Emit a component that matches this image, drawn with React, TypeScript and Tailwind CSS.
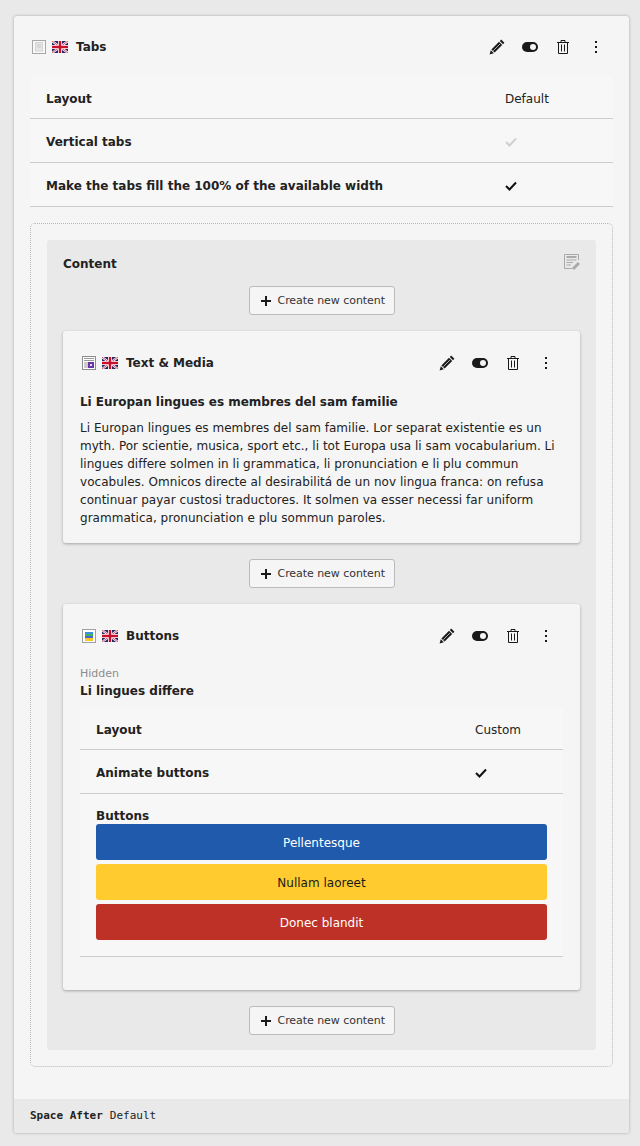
import { ReactNode } from 'react'

function UkFlag() {
  return (
    <svg width="16" height="12" viewBox="0 0 16 12" className="block shrink-0">
      <rect width="16" height="12" fill="#232a66" />
      <path d="M0 0L16 12M16 0L0 12" stroke="#fff" strokeWidth="2.2" />
      <path d="M0 0L16 12M16 0L0 12" stroke="#c8223c" strokeWidth="0.8" />
      <path d="M8 0V12M0 6H16" stroke="#fff" strokeWidth="4" />
      <path d="M8 0V12M0 6H16" stroke="#c8102e" strokeWidth="2.4" />
    </svg>
  )
}

function TabsIcon() {
  return (
    <svg width="14" height="14" viewBox="0 0 14 14" className="block shrink-0">
      <rect x="0.5" y="0.5" width="13" height="13" fill="#f8f8f8" stroke="#a8a8a8" />
      <rect x="3.5" y="2.5" width="7" height="8.5" fill="#e6e6e6" stroke="#d4d4d4" />
      <path d="M5 5H9M5 7H9" stroke="#c8c8c8" />
    </svg>
  )
}

function TextMediaIcon() {
  return (
    <svg width="14" height="14" viewBox="0 0 14 14" className="block shrink-0">
      <rect x="0.5" y="0.5" width="13" height="13" fill="#fff" stroke="#8c8c8c" />
      <path d="M2 2.5H12M2 4.5H12M2 7H6M2 9H6M2 11H6" stroke="#999999" />
      <rect x="6" y="6" width="6" height="6" fill="#6b35a8" />
      <rect x="8" y="8" width="2" height="2" fill="#e6def0" />
    </svg>
  )
}

function ButtonsIcon() {
  return (
    <svg width="14" height="14" viewBox="0 0 14 14" className="block shrink-0">
      <rect x="0.5" y="0.5" width="13" height="13" fill="#fff" stroke="#a0a0a0" />
      <rect x="3" y="3" width="8" height="2" fill="#3b8fe0" />
      <rect x="3" y="5" width="8" height="2" fill="#45b35a" />
      <rect x="3" y="7" width="8" height="2" fill="#4a62d0" />
      <rect x="3" y="9" width="8" height="3" fill="#fbc528" />
    </svg>
  )
}

function ActionIcons() {
  return (
    <div className="mr-px flex items-center text-[#1a1a1a]">
      <div className="flex h-[32px] w-[33px] items-center justify-center">
        <svg width="16" height="16" viewBox="0 0 16 16" fill="currentColor">
          <path d="M12.2.6L15.4 3.8 14 5.2 10.8 2z" />
          <path d="M10 2.8L13.2 6 5.6 13.6 2.4 10.4z" />
          <path d="M1.8 11.2L4.8 14.2 .6 15.4z" />
          <path d="M4.4 11.6L11 5" stroke="#f5f5f5" strokeWidth="0.7" fill="none" />
        </svg>
      </div>
      <div className="flex h-[32px] w-[33px] items-center justify-center">
        <svg width="16" height="10" viewBox="0 0 16 10">
          <rect width="16" height="10" rx="5" fill="currentColor" />
          <circle cx="11" cy="5" r="3" fill="#f5f5f5" />
        </svg>
      </div>
      <div className="flex h-[32px] w-[33px] items-center justify-center">
        <svg width="16" height="16" viewBox="0 0 16 16" fill="none" stroke="currentColor">
          <path d="M2 3.5H14M6 3.5V1.5H10V3.5M3.5 3.5V14.5H12.5V3.5M6.5 5.5V12.5M9.5 5.5V12.5" />
        </svg>
      </div>
      <div className="flex h-[32px] w-[33px] items-center justify-center">
        <svg width="16" height="16" viewBox="0 0 16 16" fill="currentColor">
          <rect x="7" y="2" width="2" height="2" />
          <rect x="7" y="7" width="2" height="2" />
          <rect x="7" y="12" width="2" height="2" />
        </svg>
      </div>
    </div>
  )
}

function CreateButton() {
  return (
    <div className="flex justify-center">
      <div className="flex h-[29px] w-[146px] items-center rounded-[3px] border border-[#bbbbbb] bg-[#f5f5f5] pl-[10px] text-[11px] text-[#333333]">
        <svg width="12" height="12" viewBox="0 0 12 12" className="mr-[6px]">
          <path d="M6 1V11M1 6H11" stroke="#1a1a1a" strokeWidth="2" />
        </svg>
        <span className="pt-[2px] tracking-[-0.05px]">Create new content</span>
      </div>
    </div>
  )
}

function Check({ muted }: { muted?: boolean }) {
  return (
    <svg width="12" height="10" viewBox="0 0 12 10" fill="none" className="block">
      <path d="M1 5L4.5 8.5L11 1.5" stroke={muted ? '#d0d0d0' : '#111111'} strokeWidth="2" />
    </svg>
  )
}

function Row({ label, value, h, valueClass }: { label: string; value: ReactNode; h: string; valueClass: string }) {
  return (
    <div className={`flex items-center border-b border-[#cccccc] bg-[#f7f7f7] px-4 pt-[2px] ${h}`}>
      <div className="flex-1 font-bold">{label}</div>
      <div className={valueClass}>{value}</div>
    </div>
  )
}

function Header({ icon, title }: { icon: ReactNode; title: string }) {
  return (
    <div className="flex items-center pl-[2px]">
      {icon}
      <div className="ml-[6px]">
        <UkFlag />
      </div>
      <div className="ml-[8px] flex-1 font-bold">{title}</div>
      <ActionIcons />
    </div>
  )
}

function StackButton({ label, className }: { label: string; className: string }) {
  return <div className={`flex h-9 items-center justify-center rounded-[3px] pt-[2px] ${className}`}>{label}</div>
}

export default function App() {
  return (
    <div className="min-h-[1146px] bg-[#e9e9e9] px-[14px] pt-[16px] font-['DejaVu_Sans',sans-serif] text-[12px] text-[#222222]">
      <div className="h-[1117px] w-[615px] overflow-hidden rounded-[3px] bg-[#f5f5f5] shadow-[0_0_3px_rgba(0,0,0,0.3)]">
        <div className="px-4 pt-[15px]">
          <Header icon={<TabsIcon />} title="Tabs" />
          <div className="mt-[14px]">
            <Row label="Layout" value="Default" h="h-[42px]" valueClass="w-[92px]" />
            <Row label="Vertical tabs" value={<Check muted />} h="h-[44px]" valueClass="w-[92px]" />
            <Row label="Make the tabs fill the 100% of the available width" value={<Check />} h="h-[44px]" valueClass="w-[92px]" />
          </div>
          <div className="mt-4 h-[844px] rounded-[5px] border border-dotted border-[#b8b8b8] p-4">
            <div className="h-[810px] rounded-[3px] bg-[#e9e9e9] px-4">
              <div className="flex h-[46px] items-center justify-between pt-[2px]">
                <div className="font-bold">Content</div>
                <svg width="16" height="16" viewBox="0 0 16 16" fill="none" stroke="#a9a9a9" className="mb-[4px]">
                  <path d="M14.5 6V.5H.5V14.5H8" />
                  <path d="M2.5 3H12.5" strokeWidth="2" />
                  <path d="M2.5 6H12.5M2.5 8.5H9M2.5 11H7" />
                  <path d="M9 15L15 9" strokeWidth="3" />
                </svg>
              </div>
              <CreateButton />
              <div className="my-4 h-[212px] rounded-[3px] bg-[#f5f5f5] px-[17px] pt-[16px] shadow-[0_1px_3px_rgba(0,0,0,0.3)]">
                <Header icon={<TextMediaIcon />} title="Text & Media" />
                <div className="mt-[14px] font-bold leading-[18px] tracking-[-0.04px]">Li Europan lingues es membres del sam familie</div>
                <p className="mt-2 leading-[18px] tracking-[0.03px]">
                  Li Europan lingues es membres del sam familie. Lor separat existentie es un myth. Por scientie, musica, sport etc., li tot Europa usa li sam vocabularium. Li lingues differe solmen in li grammatica, li pronunciation e li plu commun vocabules. Omnicos directe al desirabilitá de un nov lingua franca: on refusa continuar payar custosi traductores. It solmen va esser necessi far uniform grammatica, pronunciation e plu sommun paroles.
                </p>
              </div>
              <CreateButton />
              <div className="my-4 h-[386px] rounded-[3px] bg-[#f5f5f5] px-[17px] pt-[16px] shadow-[0_1px_3px_rgba(0,0,0,0.3)]">
                <Header icon={<ButtonsIcon />} title="Buttons" />
                <div className="mt-[14px] text-[11px] leading-[16px] text-[#8c8c8c]">Hidden</div>
                <div className="font-bold leading-[18px]">Li lingues differe</div>
                <div className="mt-[8px]">
                  <Row label="Layout" value="Custom" h="h-[42px]" valueClass="w-[72px]" />
                  <Row label="Animate buttons" value={<Check />} h="h-[44px]" valueClass="w-[72px]" />
                  <div className="h-[163px] border-b border-[#cccccc] bg-[#f7f7f7] px-4 pt-[15px]">
                    <div className="font-bold leading-[15px]">Buttons</div>
                    <div className="flex flex-col gap-1">
                      <StackButton label="Pellentesque" className="bg-[#1f5aad] text-white" />
                      <StackButton label="Nullam laoreet" className="bg-[#ffcb2f] text-[#1a1a1a]" />
                      <StackButton label="Donec blandit" className="bg-[#bd3126] text-white" />
                    </div>
                  </div>
                </div>
              </div>
              <CreateButton />
            </div>
          </div>
        </div>
        <div className="mt-[32px] flex h-[34px] items-center bg-[#e9e9e9] px-4 font-['DejaVu_Sans_Mono',monospace] text-[11px]">
          <span className="font-bold">Space After</span>
          <span className="ml-[7px]">Default</span>
        </div>
      </div>
    </div>
  )
}
